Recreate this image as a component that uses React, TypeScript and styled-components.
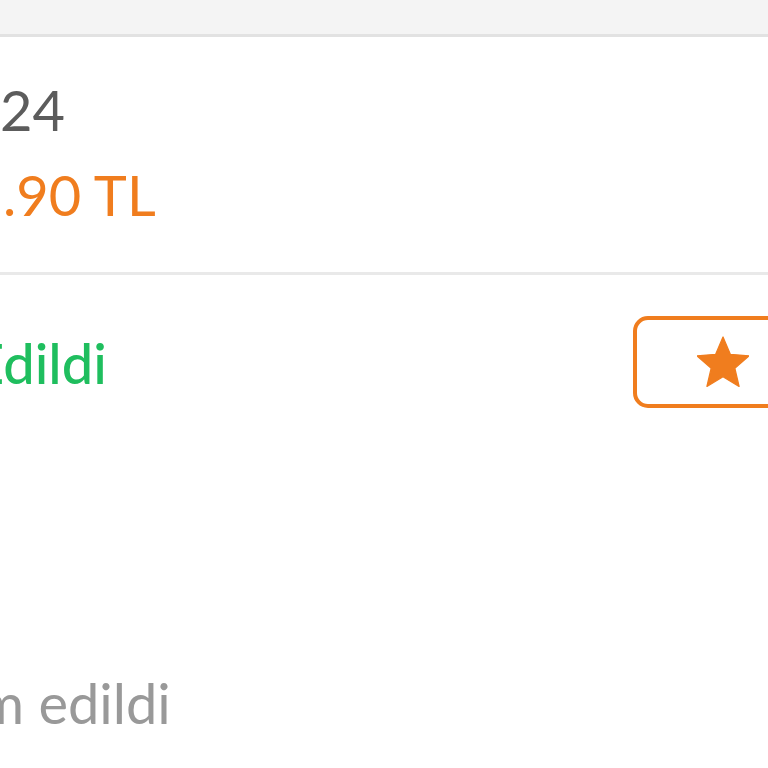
import styled, { createGlobalStyle } from 'styled-components'

const GlobalStyle = createGlobalStyle`
  html, body {
    margin: 0;
    padding: 0;
    background: #ffffff;
    overflow: hidden;
  }
  body {
    font-family: Lato, "Open Sans", sans-serif;
  }
`

const Page = styled.main`
  width: 100vw;
  height: 768px;
  overflow: hidden;
  background: #ffffff;
`

const Sheet = styled.div`
  width: 860px;
  display: flex;
  flex-direction: column;
`

const TopBar = styled.header`
  height: 34px;
  background: #f4f4f4;
  border-bottom: 3px solid #e2e2e2;
`

const InfoBlock = styled.section`
  display: flex;
  flex-direction: column;
  gap: 18px;
  padding: 39px 0 44px;
  border-bottom: 3px solid #e9e9e9;
`

const Line = styled.div<{ $color: string; $weight?: number; $shift?: number }>`
  font-size: 56px;
  line-height: 1.2;
  color: ${p => p.$color};
  font-weight: ${p => p.$weight ?? 400};
  margin-left: ${p => p.$shift ?? 0}px;
  white-space: nowrap;
`

const StatusRow = styled.div`
  display: flex;
  align-items: center;
  justify-content: space-between;
  padding: 41px 47px 0 0;
`

const RateButton = styled.div`
  box-sizing: border-box;
  flex: 0 0 180px;
  width: 180px;
  height: 92px;
  display: flex;
  align-items: center;
  justify-content: center;
  border: 4px solid #f07d1e;
  border-radius: 15px;
  background: #ffffff;
`

const StarIcon = styled.svg`
  display: block;
  flex: 0 0 auto;
  width: 52px;
  height: 52px;
`

const Note = styled.div`
  margin-top: 261px;
`

function Star() {
  return (
    <StarIcon width="52" height="52" viewBox="2 1.6 20 20">
      <path
        d="M12 17.27L18.18 21l-1.64-7.03L22 9.24l-7.19-.61L12 2 9.19 8.63 2 9.24l5.46 4.73L5.82 21z"
        fill="#f07d1e"
        stroke="#f07d1e"
        strokeWidth="0.5"
        strokeLinejoin="round"
      />
    </StarIcon>
  )
}

export default function App() {
  return (
    <Page>
      <GlobalStyle />
      <Sheet>
        <TopBar />
        <InfoBlock>
          <Line $color='#5c5c5c'>24</Line>
          <Line $color='#f07d1e' $shift={3}>.90 TL</Line>
        </InfoBlock>
        <StatusRow>
          <Line $color='#1fbe5e' $weight={500} $shift={-28}>Edildi</Line>
          <RateButton role='button'>
            <Star />
          </RateButton>
        </StatusRow>
        <Note>
          <Line $color='#999999' $shift={-22}>m edildi</Line>
        </Note>
      </Sheet>
    </Page>
  )
}
